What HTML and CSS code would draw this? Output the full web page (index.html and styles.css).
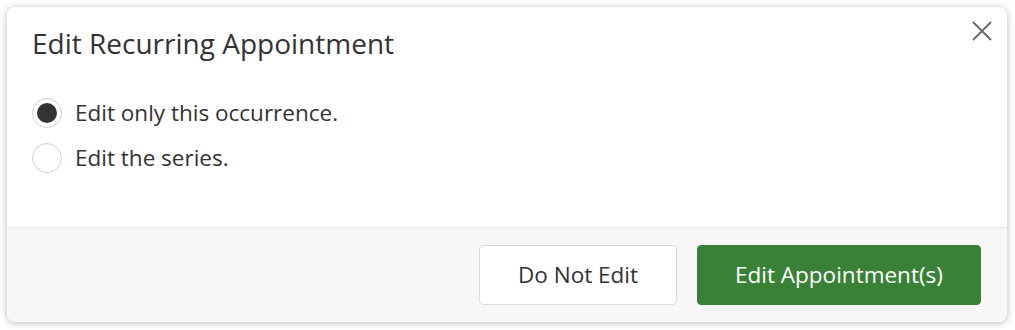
FILE: index.html
```html
<!DOCTYPE html>
<html lang="en">
<head>
  <meta charset="UTF-8" />
  <title>Edit Recurring Appointment</title>
  <link rel="stylesheet" href="styles.css">
</head>
<body>
  <div class="dialog">
    <div class="dialog-header">
      <h2 class="dialog-title">Edit Recurring Appointment</h2>
      <button class="close" aria-label="Close">
        <svg width="20" height="20" viewBox="0 0 20 20">
          <path d="M1 1 L19 19 M19 1 L1 19" stroke="#666" stroke-width="1.8" fill="none"/>
        </svg>
      </button>
    </div>
    <div class="dialog-body">
      <label class="option">
        <span class="radio checked"></span>
        <span>Edit only this occurrence.</span>
      </label>
      <label class="option">
        <span class="radio"></span>
        <span>Edit the series.</span>
      </label>
    </div>
    <div class="dialog-footer">
      <button class="btn btn-default">Do Not Edit</button>
      <button class="btn btn-primary">Edit Appointment(s)</button>
    </div>
  </div>
</body>
</html>
```

FILE: styles.css
```css
* {
  box-sizing: border-box;
  margin: 0;
  padding: 0;
}
body {
  font-family: 'Open Sans', sans-serif;
  background: #fff;
  color: #333;
  padding: 7px;
}
.dialog {
  width: 1000px;
  height: 315px;
  background: #fff;
  border-radius: 8px;
  box-shadow: 0 1px 7px rgba(0, 0, 0, 0.28);
  display: flex;
  flex-direction: column;
  overflow: hidden;
}
.dialog-header {
  display: flex;
  justify-content: space-between;
  align-items: flex-start;
  padding: 17px 15px 0 25px;
  height: 91px;
}
.dialog-title {
  font-size: 28px;
  line-height: 38px;
  font-weight: 400;
  color: #333;
}
.close {
  background: none;
  border: none;
  padding: 0;
  margin-top: -3px;
  cursor: pointer;
}
.dialog-body {
  flex: 1;
  padding: 0 25px;
  display: flex;
  flex-direction: column;
  gap: 15px;
}
.option {
  display: flex;
  align-items: center;
  gap: 13px;
  font-size: 22.5px;
  line-height: 30px;
  color: #333;
}
.radio {
  width: 30px;
  height: 30px;
  border-radius: 50%;
  border: 1px solid #d0d0d0;
  background: #fff;
  display: flex;
  align-items: center;
  justify-content: center;
}
.radio.checked::after {
  content: "";
  width: 20px;
  height: 20px;
  border-radius: 50%;
  background: #333;
}
.dialog-footer {
  height: 95px;
  background: #f7f7f7;
  border-top: 1px solid #e8e8e8;
  display: flex;
  justify-content: flex-end;
  align-items: center;
  gap: 20px;
  padding: 0 26px 1px 0;
}
.btn {
  height: 60px;
  font-family: inherit;
  font-size: 22.5px;
  border-radius: 4px;
  cursor: pointer;
}
.btn-default {
  width: 198px;
  background: #fff;
  border: 1px solid #dcdcdc;
  color: #333;
}
.btn-primary {
  width: 284px;
  background: #3a8138;
  border: 1px solid #3a8138;
  color: #fff;
}
```
